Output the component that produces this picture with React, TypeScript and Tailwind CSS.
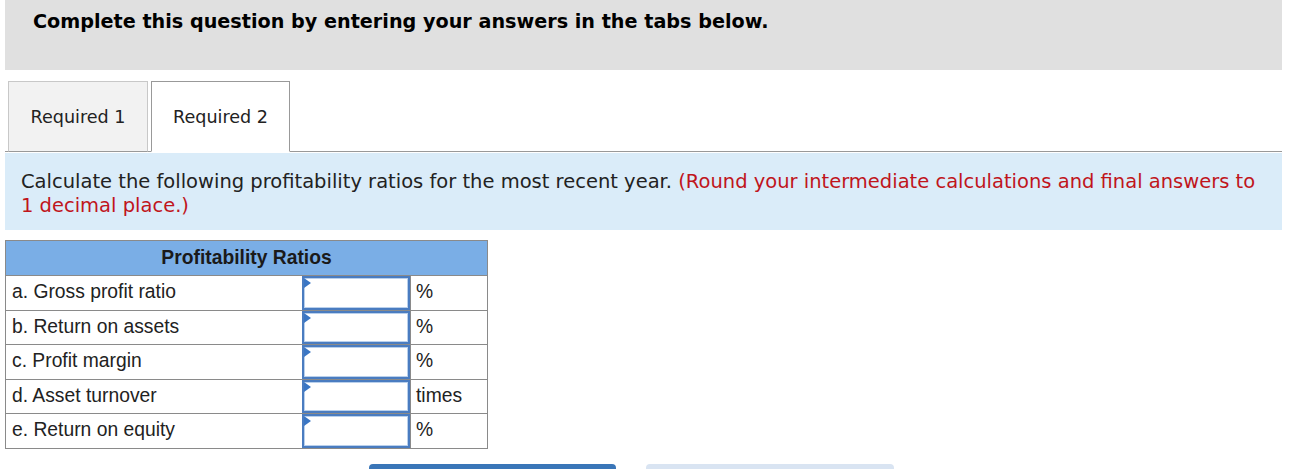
const rows = [
  { label: "a. Gross profit ratio", unit: "%" },
  { label: "b. Return on assets", unit: "%" },
  { label: "c. Profit margin", unit: "%" },
  { label: "d. Asset turnover", unit: "times" },
  { label: "e. Return on equity", unit: "%" },
];

function AnswerInput() {
  return (
    <div className="relative -ml-px h-full w-[calc(100%+1px)] border-2 border-[#4a7cc0] bg-white shadow-[inset_0_0_0_1px_#b9d0ec]">
      <span className="absolute left-0 top-0 h-0 w-0 border-y-[5px] border-l-[7px] border-y-transparent border-l-[#3a76c4]" />
    </div>
  );
}

export default function App() {
  return (
    <div className="w-[1308px] h-[469px] overflow-hidden bg-white font-['DejaVu_Sans',sans-serif] text-[#222]">
      <div className="mx-[5px] w-[1277px] h-[70px] bg-[#e0e0e0] pl-[28px] pt-[8px]">
        <h1 className="text-[19.2px] leading-[28px] font-bold text-black">
          Complete this question by entering your answers in the tabs below.
        </h1>
      </div>

      <div className="mx-[5px] w-[1277px] mt-[11px] flex items-end h-[71px] border-b border-[#999]">
        <button className="ml-[3px] w-[140px] h-[71px] -mb-px pt-[1px] bg-[#f2f2f2] border border-[#c8c8c8] border-b-[#999] text-[17.6px] text-[#222]">
          Required 1
        </button>
        <button className="ml-[3px] w-[139px] h-[71px] -mb-px pt-[1px] bg-white border border-[#999] border-b-white text-[17.6px] text-[#222]">
          Required 2
        </button>
      </div>

      <div className="mx-[5px] w-[1277px] mt-[1px] h-[77px] bg-[#daecf9] px-[16px] pt-[17px] text-[19.5px] leading-[24px] text-[#222]">
        Calculate the following profitability ratios for the most recent year.{" "}
        <span className="text-[#c0151c]">
          (Round your intermediate calculations and final answers to 1 decimal place.)
        </span>
      </div>

      <table className="ml-[5px] mt-[10px] w-[483px] border-collapse font-['Liberation_Sans',Arial,sans-serif] text-[19.3px] text-[#222]">
        <thead>
          <tr className="h-[35px] bg-[#7aaee6]">
            <th colSpan={3} className="border border-[#8a8a8a] text-center font-bold text-[19.3px] text-[#1a1a1a]">
              Profitability Ratios
            </th>
          </tr>
        </thead>
        <tbody>
          {rows.map((r) => (
            <tr key={r.label} className="h-[34.5px]">
              <td className="w-[297px] border border-[#8a8a8a] pl-[6px]">{r.label}</td>
              <td className="w-[108px] border border-[#8a8a8a] p-0 h-[34.5px]">
                <AnswerInput />
              </td>
              <td className="border border-[#8a8a8a] pl-[5px]">{r.unit}</td>
            </tr>
          ))}
        </tbody>
      </table>

      <div className="mt-[15px] flex gap-[30px] pl-[369px]">
        <div className="w-[247px] h-[20px] rounded-t-[4px] bg-[#3a76b8]" />
        <div className="w-[248px] h-[20px] rounded-t-[4px] bg-[#d9e4f2]" />
      </div>
    </div>
  );
}
